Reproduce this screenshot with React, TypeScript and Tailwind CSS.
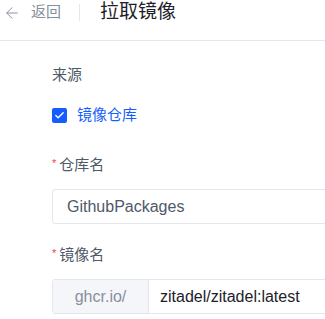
import { ArrowLeft, Check } from "lucide-react";

const font = { fontFamily: '"Liberation Sans", "Noto Sans CJK SC", sans-serif' };

const App = () => {
  return (
    <div className="h-[319px] w-[325px] overflow-hidden bg-white" style={font}>
      {/* Header */}
      <div className="h-[41px] border-b border-[#e5e6eb]">
        <div className="flex h-[25px] items-center">
          <button className="ml-[3px] flex items-center gap-[10px] text-[15px] text-[#86909c]">
            <ArrowLeft size={18} strokeWidth={1.3} />
            <span>返回</span>
          </button>
          <span className="ml-[18px] h-[17px] w-px bg-[#e5e6eb]" />
          <h1 className="ml-[20px] text-[19px] text-[#1d2129]">拉取镜像</h1>
        </div>
      </div>

      {/* Form */}
      <div className="w-[400px] pl-[52px] pt-[23px]">
        <div className="text-[15px] leading-[22px] text-[#4e5969]">来源</div>
        <label className="mt-[18px] flex h-[22px] items-center gap-[10px]">
          <span className="flex h-[15px] w-[15px] items-center justify-center rounded-[2px] bg-[#165dff] text-white">
            <Check size={11} strokeWidth={3} />
          </span>
          <span className="text-[15px] text-[#165dff]">镜像仓库</span>
        </label>

        <div className="mt-[28px] flex h-[22px] items-center text-[15px] text-[#4e5969]">
          <span className="mr-[3px] -mt-[4px] text-[11px] leading-none text-[#f53f3f]">*</span>
          仓库名
        </div>
        <div className="mt-[13px] flex h-[35px] items-center rounded-[3px] border border-[#e5e6eb] px-[14px] text-[16px] text-[#4e5969]">
          GithubPackages
        </div>

        <div className="mt-[20px] flex h-[22px] items-center text-[15px] text-[#4e5969]">
          <span className="mr-[3px] -mt-[4px] text-[11px] leading-none text-[#f53f3f]">*</span>
          镜像名
        </div>
        <div className="mt-[13px] flex h-[35px] rounded-[3px] border border-[#e5e6eb]">
          <div className="flex w-[96px] items-center justify-center border-r border-[#e5e6eb] bg-[#f5f6f9] text-[16px] text-[#86909c]">
            ghcr.io/
          </div>
          <div className="flex flex-1 items-center px-[11px] text-[16px] text-[#1d2129]">
            zitadel/zitadel:latest
          </div>
        </div>
      </div>
    </div>
  );
};

export default App;
